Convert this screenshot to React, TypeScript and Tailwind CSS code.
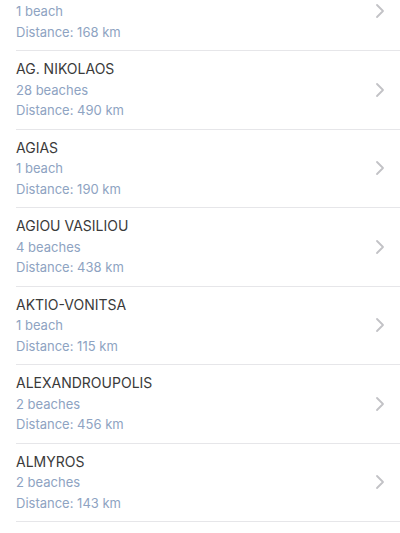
import { ChevronRight } from 'lucide-react';

interface Place {
  name: string;
  beaches: number;
  distance: number;
}

const places: Place[] = [
  { name: 'ACHAIA', beaches: 1, distance: 168 },
  { name: 'AG. NIKOLAOS', beaches: 28, distance: 490 },
  { name: 'AGIAS', beaches: 1, distance: 190 },
  { name: 'AGIOU VASILIOU', beaches: 4, distance: 438 },
  { name: 'AKTIO-VONITSA', beaches: 1, distance: 115 },
  { name: 'ALEXANDROUPOLIS', beaches: 2, distance: 456 },
  { name: 'ALMYROS', beaches: 2, distance: 143 },
  { name: 'AMARI', beaches: 3, distance: 512 },
];

const App = () => {
  return (
    <div className="h-[533px] w-[400px] overflow-hidden bg-white font-['Inter',sans-serif]">
      <div className="-mt-[27.5px]">
        {places.map((p) => (
          <div key={p.name} className="pl-4">
            <div className="flex h-[78.5px] items-center border-b border-[#e6e6e9] pr-[8px]">
              <div className="flex-1 leading-[20.5px]">
                <div className="text-[14px] text-[#3a3a3a]">{p.name}</div>
                <div className="text-[13px] text-[#8ea3c2]">
                  {p.beaches} {p.beaches === 1 ? 'beach' : 'beaches'}
                </div>
                <div className="text-[13px] text-[#8ea3c2]">Distance: {p.distance} km</div>
              </div>
              <ChevronRight className="h-[24px] w-[24px] text-[#c2c2c6]" strokeWidth={1.8} />
            </div>
          </div>
        ))}
      </div>
    </div>
  );
};

export default App;
